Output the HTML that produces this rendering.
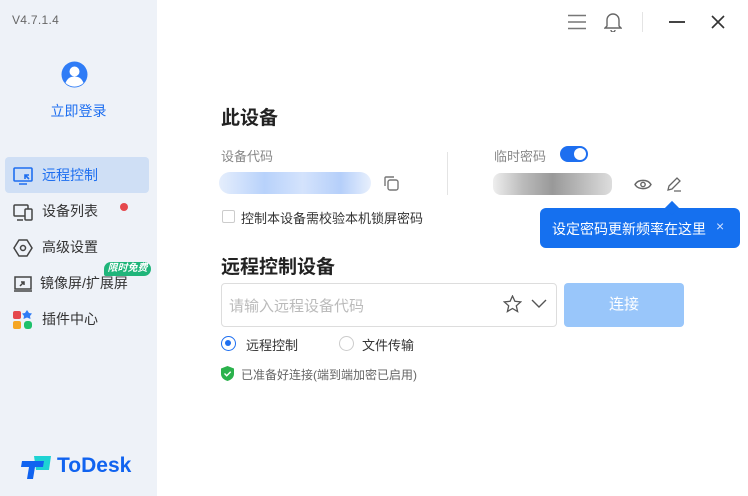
<!DOCTYPE html><html><head><meta charset="utf-8"><style>
*{margin:0;padding:0;box-sizing:border-box}
body{width:748px;height:496px;overflow:hidden;background:#fff;font-family:"Liberation Sans","Noto Sans CJK SC",sans-serif;position:relative;color:#222}
.a{position:absolute}
.side{left:0;top:0;width:157px;height:496px;background:#eef2f8}
.item{left:5px;width:144px;height:36px;font-size:14px;color:#333;line-height:36px;padding-left:37px}
.item svg{position:absolute;left:8px;top:9px}
.lbl{font-size:13px;color:#888}
</style></head><body>
<div class="a side">
<div class="a" style="left:12px;top:13px;font-size:12px;color:#666;letter-spacing:.3px">V4.7.1.4</div>
<svg class="a" style="left:61px;top:61px" width="27" height="27" viewBox="0 0 27 27"><circle cx="13.5" cy="13.5" r="13" fill="#2f7cf6"/><circle cx="13.5" cy="10.5" r="5" fill="#fff"/><path d="M4.5 22c2-5 5-6.5 9-6.5s7 1.5 9 6.5a13 13 0 0 1-18 0z" fill="#fff"/></svg>
<div class="a" style="left:0;width:157px;text-align:center;top:101px;font-size:14px;color:#1e6ff0">立即登录</div>
<div class="a item" style="top:157px;background:#cfdff5;border-radius:4px;color:#1e6ff0">
<svg width="20" height="20" viewBox="0 0 20 20" fill="none" stroke="#1e6ff0" stroke-width="1.6"><rect x="1" y="2" width="18" height="13" rx="1"/><path d="M6 18h8M12 9l4 4M12 13V9h4"/></svg>远程控制</div>
<div class="a item" style="top:193px"><svg width="20" height="20" viewBox="0 0 20 20" fill="none" stroke="#444" stroke-width="1.5"><rect x="1" y="3" width="14" height="11" rx="1"/><path d="M4 18h6"/><rect x="12" y="7" width="7" height="11" rx="1" fill="#eef2f8"/></svg>设备列表</div>
<div class="a" style="left:120px;top:203px;width:8px;height:8px;border-radius:50%;background:#e5484d"></div>
<div class="a item" style="top:229px"><svg width="20" height="20" viewBox="0 0 20 20" fill="none" stroke="#444" stroke-width="1.5"><path d="M6 2h8l5 8-5 8H6l-5-8z"/><circle cx="10" cy="10" r="2.5"/></svg>高级设置</div>
<div class="a item" style="top:265px;padding-left:35px"><svg width="20" height="20" viewBox="0 0 20 20" fill="none" stroke="#444" stroke-width="1.5"><rect x="2" y="3" width="16" height="12"/><path d="M1 17h18M7 12l4-4M8 8h3v3"/></svg>镜像屏/扩展屏</div>
<div class="a" style="left:104px;top:262px;width:47px;height:14px;border-radius:7px 7px 7px 2px;background:#1fb57a;color:#fff;font-size:10px;line-height:14px;text-align:center;font-style:italic;font-weight:bold">限时免费</div>
<div class="a item" style="top:301px"><svg width="20" height="20" viewBox="0 0 20 20"><rect x="0" y="1" width="8" height="8" rx="2" fill="#e5484d"/><path d="M14 0l2 3 3 .5-2 2.5.5 3-3.5-1.5-3.5 1.5.5-3-2-2.5 3-.5z" fill="#2f7cf6"/><rect x="0" y="11" width="8" height="8" rx="2" fill="#f5a623"/><rect x="11" y="11" width="8" height="8" rx="3" fill="#1fc16b"/></svg>插件中心</div>
<svg class="a" style="left:21px;top:456px" width="32" height="24" viewBox="0 0 32 24"><path d="M13 0h17l-2 14H15z" fill="#1ed3d3"/><path d="M1 5h22l-1 6h-8l-2 12H6l2-12H0z" fill="#1063f0"/></svg>
<div class="a" style="left:57px;top:454px;font-size:21px;font-weight:bold;color:#1063f0">ToDesk</div>
</div>
<!-- top right -->
<svg class="a" style="left:568px;top:14px" width="18" height="16"><path d="M0 1.5h18M0 8h18M0 14.5h18" stroke="#777" stroke-width="1.4"/></svg>
<svg class="a" style="left:604px;top:12px" width="18" height="20" viewBox="0 0 18 20" fill="none" stroke="#666" stroke-width="1.4"><path d="M3 14V8a6 6 0 0 1 12 0v6l2 2H1z"/><path d="M7 18a2 2 0 0 0 4 0"/></svg>
<div class="a" style="left:642px;top:12px;width:1px;height:20px;background:#e4e4e4"></div>
<div class="a" style="left:669px;top:21px;width:16px;height:1.6px;background:#444"></div>
<svg class="a" style="left:711px;top:15px" width="14" height="14"><path d="M1 1l12 12M13 1L1 13" stroke="#333" stroke-width="1.6"/></svg>
<!-- device -->
<div class="a" style="left:221px;top:103px;font-size:19px;font-weight:bold">此设备</div>
<div class="a lbl" style="left:221px;top:146px">设备代码</div>
<div class="a" style="left:219px;top:172px;width:152px;height:22px;border-radius:11px;background:linear-gradient(90deg,#e5eefc,#b8d2fb 30%,#d4e3fc 55%,#b5cffa 80%,#e8f0fd)"></div>
<svg class="a" style="left:383px;top:175px" width="17" height="17" fill="none" stroke="#777" stroke-width="1.4"><rect x="5" y="5" width="10" height="10" rx="2"/><path d="M2 11V3a1 1 0 0 1 1-1h8"/></svg>
<div class="a" style="left:447px;top:152px;width:1px;height:43px;background:#e4e4e4"></div>
<div class="a lbl" style="left:494px;top:146px">临时密码</div>
<div class="a" style="left:560px;top:146px;width:28px;height:16px;border-radius:8px;background:#1e6ff0"><div class="a" style="right:2px;top:2px;width:12px;height:12px;border-radius:50%;background:#fff"></div></div>
<div class="a" style="left:493px;top:173px;width:119px;height:22px;border-radius:8px;background:linear-gradient(90deg,#eee,#bbb 25%,#999 50%,#bbb 75%,#ddd)"></div>
<svg class="a" style="left:634px;top:178px" width="18" height="13" fill="none" stroke="#666" stroke-width="1.4"><path d="M1 6.5C4 1 14 1 17 6.5 14 12 4 12 1 6.5z"/><circle cx="9" cy="6.5" r="2.2"/></svg>
<svg class="a" style="left:666px;top:176px" width="16" height="16" fill="none" stroke="#666" stroke-width="1.3"><path d="M2 14l1-4 8-8 3 3-8 8zM8 15h7"/></svg>
<div class="a" style="left:222px;top:210px;width:13px;height:13px;border:1px solid #ccc;border-radius:2px"></div>
<div class="a" style="left:241px;top:208px;font-size:13px;color:#333">控制本设备需校验本机锁屏密码</div>
<div class="a" style="left:540px;top:208px;width:200px;height:40px;border-radius:6px;background:#1570ef"></div>
<div class="a" style="left:667px;top:203px;width:10px;height:10px;background:#1570ef;transform:rotate(45deg)"></div>
<div class="a" style="left:552px;top:219px;font-size:14px;color:#fff">设定密码更新频率在这里</div>
<div class="a" style="left:716px;top:218px;font-size:14px;color:#cfe0ff">×</div>
<!-- remote -->
<div class="a" style="left:221px;top:252px;font-size:19px;font-weight:bold">远程控制设备</div>
<div class="a" style="left:221px;top:283px;width:336px;height:44px;border:1px solid #ddd;border-radius:4px"></div>
<div class="a" style="left:229px;top:295px;font-size:15px;color:#bbb">请输入远程设备代码</div>
<svg class="a" style="left:503px;top:295px" width="19" height="18" fill="none" stroke="#555" stroke-width="1.3"><path d="M9.5 1l2.4 5.3 5.8.6-4.4 3.9 1.3 5.7-5.1-3-5.1 3 1.3-5.7L1.3 6.9l5.8-.6z"/></svg>
<svg class="a" style="left:531px;top:299px" width="16" height="10" fill="none" stroke="#555" stroke-width="1.4"><path d="M1 1l7 7 7-7"/></svg>
<div class="a" style="left:564px;top:283px;width:120px;height:44px;border-radius:4px;background:#99c6fa;color:#fff;font-size:15px;line-height:44px;text-align:center">连接</div>
<div class="a" style="left:221px;top:336px;width:15px;height:15px;border:1.5px solid #1e6ff0;border-radius:50%"><div class="a" style="left:3px;top:3px;width:6px;height:6px;border-radius:50%;background:#1e6ff0"></div></div>
<div class="a" style="left:246px;top:335px;font-size:13px;color:#333">远程控制</div>
<div class="a" style="left:339px;top:336px;width:15px;height:15px;border:1px solid #ccc;border-radius:50%"></div>
<div class="a" style="left:362px;top:335px;font-size:13px;color:#333">文件传输</div>
<svg class="a" style="left:221px;top:366px" width="13" height="15"><path d="M6.5 0L13 2.5V8c0 3.5-3 6-6.5 7C3 14 0 11.5 0 8V2.5z" fill="#2bb24c"/><path d="M3.5 7.5l2.2 2.2 4-4" stroke="#fff" stroke-width="1.4" fill="none"/></svg>
<div class="a" style="left:241px;top:366px;font-size:12px;color:#666">已准备好连接(端到端加密已启用)</div>
</body></html>
